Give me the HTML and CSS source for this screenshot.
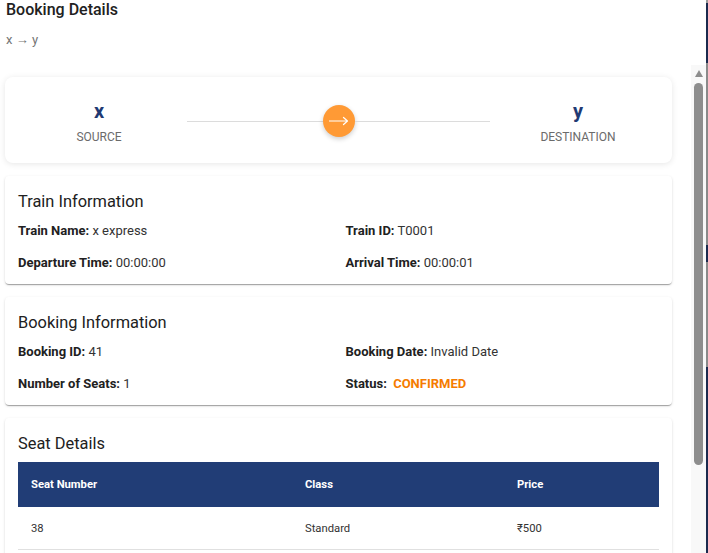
FILE: index.html
```html
<!DOCTYPE html>
<html lang="en">
<head>
<meta charset="utf-8">
<title>Booking Details</title>
<link rel="stylesheet" href="styles.css">
</head>
<body>
<div class="screen">
  <section class="dialog">
    <header class="dialog-head">
      <h2 class="dialog-title">Booking Details</h2>
      <p class="dialog-sub">x → y</p>
    </header>
    <div class="dialog-main">
      <div class="dialog-body">
        <div class="card route-card">
          <div class="station">
            <span class="station-code">x</span>
            <span class="station-label">SOURCE</span>
          </div>
          <div class="route-track">
            <span class="route-line"></span>
            <span class="route-dot">
              <svg class="route-arrow" viewBox="0 0 20 10" width="20" height="10" aria-hidden="true">
                <path d="M0.5 5H18.5M14.5 1.5L18.5 5L14.5 8.5" fill="none" stroke="#fff" stroke-width="1.2" stroke-linecap="round" stroke-linejoin="round"/>
              </svg>
            </span>
            <span class="route-line"></span>
          </div>
          <div class="station">
            <span class="station-code">y</span>
            <span class="station-label">DESTINATION</span>
          </div>
        </div>

        <div class="card info-card">
          <h3 class="card-title">Train Information</h3>
          <div class="info-grid">
            <p class="info-item"><strong>Train Name:</strong> x express</p>
            <p class="info-item"><strong>Train ID:</strong> T0001</p>
            <p class="info-item"><strong>Departure Time:</strong> 00:00:00</p>
            <p class="info-item"><strong>Arrival Time:</strong> 00:00:01</p>
          </div>
        </div>

        <div class="card info-card">
          <h3 class="card-title">Booking Information</h3>
          <div class="info-grid">
            <p class="info-item"><strong>Booking ID:</strong> 41</p>
            <p class="info-item"><strong>Booking Date:</strong> Invalid Date</p>
            <p class="info-item"><strong>Number of Seats:</strong> 1</p>
            <p class="info-item"><strong>Status:</strong> <span class="status">CONFIRMED</span></p>
          </div>
        </div>

        <div class="card info-card">
          <h3 class="card-title">Seat Details</h3>
          <table class="seat-table">
            <thead>
              <tr>
                <th class="col-seat">Seat Number</th>
                <th class="col-class">Class</th>
                <th class="col-price">Price</th>
              </tr>
            </thead>
            <tbody>
              <tr>
                <td>38</td>
                <td>Standard</td>
                <td>₹500</td>
              </tr>
            </tbody>
          </table>
        </div>
      </div>
      <div class="scrollbar" aria-hidden="true">
        <span class="scroll-arrow"></span>
        <span class="scroll-thumb"></span>
      </div>
    </div>
  </section>
  <div class="backdrop"></div>
</div>
</body>
</html>
```

FILE: styles.css
```css
html, body {
  margin: 0;
  height: 100%;
  overflow: hidden;
}

body {
  font-family: Roboto, "Liberation Sans", sans-serif;
  background: #fff;
}

.screen {
  display: flex;
  height: 553px;
  overflow: hidden;
}

.dialog {
  width: 706px;
  flex: none;
  background: #fff;
  display: flex;
  flex-direction: column;
}

.backdrop {
  flex: 1;
  background: linear-gradient(to bottom,
    #9a9a9a 0 3px,
    #1b2a4e 3px 63px,
    #8a8a8a 63px 245px,
    #1b2a4e 245px 262px,
    #8a8a8a 262px 367px,
    #1b2a4e 367px);
}

.dialog-head {
  flex: none;
  height: 65px;
  box-sizing: border-box;
  padding: 0 6px;
}

.dialog-title {
  margin: 0;
  font-size: 16px;
  font-weight: 500;
  line-height: 20px;
  color: #212121;
}

.dialog-sub {
  margin: 10px 0 0;
  font-size: 13px;
  line-height: 20px;
  color: #757575;
}

.dialog-main {
  flex: 1;
  min-height: 0;
  display: flex;
}

.dialog-body {
  flex: 1;
  min-width: 0;
  overflow: hidden;
  padding: 12px 19px 0 5px;
}

.scrollbar {
  width: 15px;
  flex: none;
  background: #f8f8f8;
  display: flex;
  flex-direction: column;
  align-items: center;
}

.scroll-arrow {
  width: 0;
  height: 0;
  margin-top: 5px;
  border-left: 4.5px solid transparent;
  border-right: 4.5px solid transparent;
  border-bottom: 7px solid #8d8d8d;
}

.scroll-thumb {
  width: 9px;
  height: 382px;
  margin-top: 6px;
  border-radius: 5px;
  background: #8d8d8d;
}

.card {
  background: #fff;
  border-radius: 4px;
  box-shadow: 0 2px 1px -1px rgba(0, 0, 0, 0.2), 0 1px 1px 0 rgba(0, 0, 0, 0.14), 0 1px 3px 0 rgba(0, 0, 0, 0.12);
  margin-bottom: 13px;
}

.route-card {
  display: grid;
  grid-template-columns: 156px 1fr 156px;
  padding: 18px 16px 16px;
  border-radius: 8px;
  box-shadow: 0 1px 6px rgba(0, 0, 0, 0.1);
  margin-bottom: 13px;
}

.station {
  display: flex;
  flex-direction: column;
  align-items: center;
}

.station-code {
  font-size: 20px;
  font-weight: 700;
  line-height: 32px;
  color: #1f3a73;
}

.station-label {
  font-size: 12px;
  line-height: 20px;
  color: #6b6b6b;
}

.route-track {
  display: flex;
  align-items: center;
  padding: 0 10px;
}

.route-line {
  flex: 1;
  height: 1px;
  background: #dcdcdc;
}

.route-dot {
  width: 32px;
  height: 32px;
  flex: none;
  border-radius: 50%;
  background: #ff9a35;
  display: flex;
  align-items: center;
  justify-content: center;
  box-shadow: 0 2px 5px rgba(0, 0, 0, 0.2);
}

.route-arrow {
  display: block;
}

.info-card {
  padding: 13px 13px 11px;
}

.card-title {
  margin: 0 0 6px;
  font-size: 16.4px;
  font-weight: 400;
  line-height: 26px;
  color: #212121;
}

.info-grid {
  display: grid;
  grid-template-columns: 1fr 1fr;
  column-gap: 14px;
  row-gap: 12px;
}

.info-item {
  margin: 0;
  font-size: 13px;
  line-height: 20px;
  color: #333;
}

.info-item strong {
  font-weight: 700;
  color: #212121;
}

.status {
  margin-left: 3px;
  color: #f57c00;
  font-weight: 700;
}

.seat-table {
  width: 100%;
  margin-top: -1px;
  border-collapse: collapse;
}

.seat-table th {
  background: #213d76;
  color: #fff;
  font-size: 11.25px;
  font-weight: 700;
  text-align: left;
  height: 45px;
  padding: 0 13px;
}

.seat-table td {
  font-size: 11.25px;
  color: #333;
  height: 42px;
  box-sizing: border-box;
  padding: 2px 13px 0;
  border-bottom: 1px solid #e0e0e0;
}

.col-seat { width: 248px; }
.col-class { width: 186px; }
```
